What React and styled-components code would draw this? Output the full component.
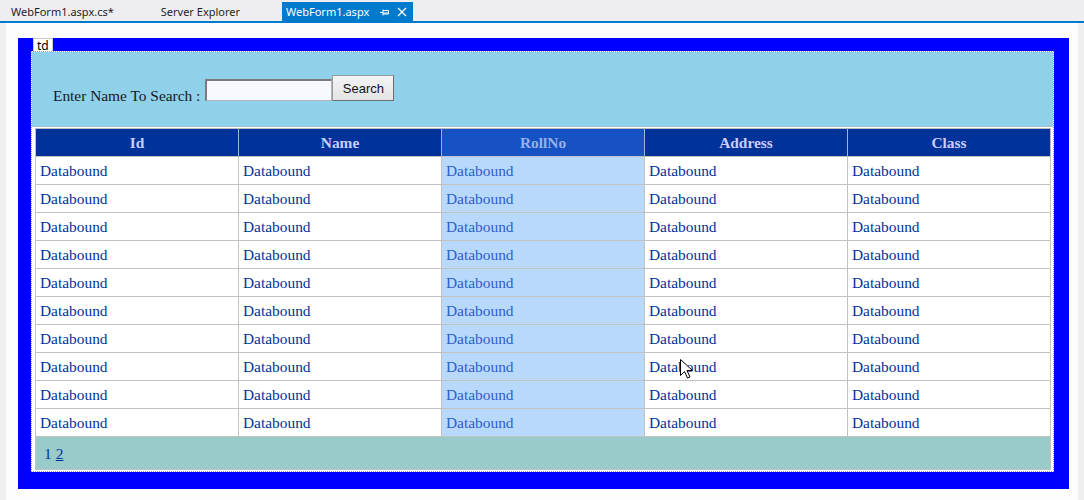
import React from "react";
import styled, { createGlobalStyle } from "styled-components";

const Global = createGlobalStyle`
  html, body { margin: 0; padding: 0; }
  body { width: 1084px; height: 500px; overflow: hidden; background: #fcfcfc; }
`;

const Page = styled.div`
  width: 1084px;
  height: 500px;
  display: flex;
  flex-direction: column;
  position: relative;
`;

const TabBar = styled.div`
  height: 21px;
  background: #eeeef2;
  display: flex;
  align-items: flex-end;
  border-bottom: 2px solid #007acc;
  font-family: "Noto Sans", "Open Sans", sans-serif;
  font-size: 11px;
`;

const Tab = styled.div`
  height: 19px;
  display: flex;
  align-items: center;
  padding: 0 ${(p) => p.$pr || 0}px 0 ${(p) => p.$pl || 0}px;
  margin-left: ${(p) => p.$ml || 0}px;
  background: ${(p) => (p.$active ? "#007acc" : "transparent")};
  color: ${(p) => (p.$active ? "#ffffff" : "#1e1e1e")};
  white-space: nowrap;
`;

const TabIcons = styled.span`
  display: flex;
  align-items: center;
  gap: 7px;
  margin-left: 11px;
`;

const Main = styled.div`
  flex: 1;
  display: flex;
`;

const Gutter = styled.div`
  width: 6px;
  background: #efefef;
`;

const Surface = styled.div`
  flex: 1;
  background: #fdfdfd;
  padding: 15px 0 0 12px;
`;

const BlueBox = styled.div`
  width: 1051px;
  height: 451px;
  box-sizing: border-box;
  background: #0000fe;
  padding: 0 15px 0 13px;
  display: flex;
  flex-direction: column;
`;

const TagLabel = styled.div`
  align-self: flex-start;
  margin-left: 2px;
  height: 13px;
  line-height: 13px;
  padding: 0 3px;
  background: #ffffff;
  border: 1px solid #c8c8c8;
  border-bottom: none;
  box-sizing: border-box;
  font-family: "Noto Sans", "Liberation Sans", sans-serif;
  font-size: 12px;
  color: #000;
`;

const Inner = styled.div`
  background: #ffffff;
  border: 1px dotted #9a9a9a;
  display: flex;
  flex-direction: column;
`;

const SearchCell = styled.div`
  height: 75px;
  box-sizing: border-box;
  background: #8fd0ea;
  border-bottom: 1px dotted #b8b8b8;
  display: flex;
  align-items: flex-end;
  padding: 0 0 25px 21px;
  font-family: "Liberation Serif", "Times New Roman", serif;
  font-size: 15.4px;
  color: #1a1a1a;
`;

const Label = styled.span`
  line-height: 17px;
  margin-bottom: -3px;
  margin-right: 5px;
`;

const TextBox = styled.input`
  width: 127px;
  height: 22px;
  box-sizing: border-box;
  border: 1px solid #b5b5b5;
  border-top: 2px solid #7a7a7a;
  border-left: 2px solid #7a7a7a;
  background: #f6faff;
  padding: 0;
  margin: 0;
  outline: none;
`;

const Button = styled.button`
  width: 62px;
  height: 26px;
  box-sizing: border-box;
  margin: 0;
  padding: 0;
  border: 1px solid #9a9a9a;
  border-right-color: #6e6e6e;
  border-bottom-color: #6e6e6e;
  background: linear-gradient(#f4f4f4, #e4e4e4);
  font-family: "Liberation Sans", Arial, sans-serif;
  font-size: 13px;
  color: #111;
`;

const GridCell = styled.div`
  padding: 1px 2px 1px 3px;
`;

const Grid = styled.table`
  width: 1016px;
  border-collapse: collapse;
  table-layout: fixed;
  border: 1px solid #bdbdbd;
  font-family: "Liberation Serif", "Times New Roman", serif;
  font-size: 15.4px;
`;

const Th = styled.th`
  height: 27px;
  padding: 0;
  background: ${(p) => (p.$sel ? "#1752c4" : "#003399")};
  color: ${(p) => (p.$sel ? "#93b2ee" : "#ccccff")};
  font-weight: bold;
  text-align: center;
  border-left: 1px solid #9fb4d6;
  &:first-child { border-left: 1px solid #bdbdbd; }
`;

const Td = styled.td`
  height: 27px;
  padding: 0 0 0 4px;
  background: ${(p) => (p.$sel ? "#b8d9fc" : "#ffffff")};
  color: ${(p) => (p.$sel ? "#2d5ecc" : "#003399")};
  border: 1px solid #c2c2c2;
  white-space: nowrap;
`;

const PagerCell = styled.td`
  height: 31px;
  padding: 1px 0 0 8px;
  background: #99cbcb;
  color: #003399;
  border: 1px solid #c2c2c2;
`;

const PageLink = styled.a`
  color: #003399;
  text-decoration: underline;
  margin-left: 4px;
`;

const Cursor = styled.svg`
  position: absolute;
  left: 680px;
  top: 359px;
`;

const cols = ["Id", "Name", "RollNo", "Address", "Class"];
const rows = Array.from({ length: 10 });

export default function App() {
  return (
    <Page>
      <Global />
      <TabBar>
        <Tab $pl={11}>WebForm1.aspx.cs*</Tab>
        <Tab $ml={47}>Server Explorer</Tab>
        <Tab $active $ml={42} $pl={4} $pr={6}>
          WebForm1.aspx
          <TabIcons>
            <svg width="10" height="10" viewBox="0 0 10 10">
              <path d="M0 5.5H3M3 2.5V8.5M3 3.5H8.5V7H3M3 6H8.5" stroke="#fff" strokeWidth="1" fill="none" />
            </svg>
            <svg width="10" height="10" viewBox="0 0 10 10">
              <path d="M1 1L9 9M9 1L1 9" stroke="#fff" strokeWidth="1.4" />
            </svg>
          </TabIcons>
        </Tab>
      </TabBar>
      <Main>
        <Gutter />
        <Surface>
          <BlueBox>
            <TagLabel>td</TagLabel>
            <Inner>
              <SearchCell>
                <Label>Enter Name To Search :</Label>
                <TextBox />
                <Button>Search</Button>
              </SearchCell>
              <GridCell>
                <Grid>
                  <thead>
                    <tr>
                      {cols.map((c) => (
                        <Th key={c} $sel={c === "RollNo"}>{c}</Th>
                      ))}
                    </tr>
                  </thead>
                  <tbody>
                    {rows.map((_, i) => (
                      <tr key={i}>
                        {cols.map((c) => (
                          <Td key={c} $sel={c === "RollNo"}>Databound</Td>
                        ))}
                      </tr>
                    ))}
                    <tr>
                      <PagerCell colSpan={5}>
                        1<PageLink href="#">2</PageLink>
                      </PagerCell>
                    </tr>
                  </tbody>
                </Grid>
              </GridCell>
            </Inner>
          </BlueBox>
        </Surface>
        <Gutter />
      </Main>
      <Cursor width="13" height="20" viewBox="0 0 13 20">
        <path d="M0.5 0.5V16.5L4.5 12.5L7.5 19L10 18L7 11.5H12.5Z" fill="#fff" stroke="#000" strokeWidth="1" />
      </Cursor>
    </Page>
  );
}
